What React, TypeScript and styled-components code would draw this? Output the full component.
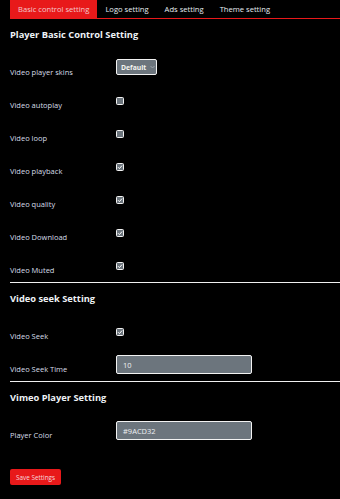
import styled, { createGlobalStyle } from 'styled-components';

const GlobalStyle = createGlobalStyle`
  html, body {
    margin: 0;
    padding: 0;
    background: #000;
  }
  body {
    font-family: 'Open Sans', 'DejaVu Sans', sans-serif;
    color: #dde3ea;
  }
`;

const tabs = ['Basic control setting', 'Logo setting', 'Ads setting', 'Theme setting'];

const basicRows = [
  { label: 'Video player skins', kind: 'select' },
  { label: 'Video autoplay', kind: 'check', checked: false },
  { label: 'Video loop', kind: 'check', checked: false },
  { label: 'Video playback', kind: 'check', checked: true },
  { label: 'Video quality', kind: 'check', checked: true },
  { label: 'Video Download', kind: 'check', checked: true },
  { label: 'Video Muted', kind: 'check', checked: true },
];

const CheckBox = ({ checked }: { checked: boolean }) => (
  <Box>
    {checked && (
      <svg width="6" height="6" viewBox="0 0 6 6">
        <path d="M1 3.2 L2.4 4.6 L5 1.6" stroke="#fff" strokeWidth="1" fill="none" />
      </svg>
    )}
  </Box>
);

const App = () => {
  return (
    <Page>
      <GlobalStyle />
      <TabBar>
        {tabs.map((t, i) => (
          <Tab key={t} active={i === 0}>{t}</Tab>
        ))}
      </TabBar>

      <Heading>Player Basic Control Setting</Heading>
      {basicRows.map((r) => (
        <Row key={r.label}>
          <Label>{r.label}</Label>
          {r.kind === 'select' ? (
            <Select>
              <span>Default</span>
              <svg width="5" height="4" viewBox="0 0 5 4">
                <path d="M0.5 1 L2.5 3 L4.5 1" stroke="#a8b0b8" strokeWidth="0.8" fill="none" />
              </svg>
            </Select>
          ) : (
            <CheckBox checked={!!r.checked} />
          )}
        </Row>
      ))}
      <Divider />

      <Heading>Video seek Setting</Heading>
      <Row>
        <Label>Video Seek</Label>
        <CheckBox checked />
      </Row>
      <Row>
        <Label>Video Seek Time</Label>
        <TextField>10</TextField>
      </Row>
      <Divider />

      <Heading>Vimeo Player Setting</Heading>
      <Row>
        <Label>Player Color</Label>
        <TextField>#9ACD32</TextField>
      </Row>

      <SaveButton>Save Settings</SaveButton>
    </Page>
  );
};

const Page = styled.div`
  padding: 0 0 12px 10px;
  background: #000;
  min-height: 499px;
  box-sizing: border-box;
`;

const TabBar = styled.div`
  display: flex;
  height: 18px;
  border-bottom: 1px solid #e8191a;
`;

const Tab = styled.div<{ active?: boolean }>`
  padding: 0 8px;
  height: 18px;
  display: flex;
  align-items: center;
  font-size: 7.6px;
  color: ${({ active }) => (active ? '#f4c8cc' : '#e6ecf2')};
  background: ${({ active }) => (active ? '#e8191a' : 'transparent')};
  white-space: nowrap;
`;

const Heading = styled.div`
  margin: 10px 0 11px;
  height: 12px;
  line-height: 12px;
  font-size: 9.3px;
  font-weight: 700;
  color: #eef2f6;
`;

const Row = styled.div`
  display: grid;
  grid-template-columns: 106px 1fr;
  align-items: start;
  height: 33px;
`;

const Label = styled.div`
  padding-top: 15px;
  line-height: 10px;
  font-size: 7.5px;
  color: #d6dee8;
  white-space: nowrap;
`;

const Box = styled.div`
  margin-top: 12px;
  width: 6px;
  height: 6px;
  border: 1px solid #f2f2f2;
  border-radius: 1.5px;
  background: #6c757d;
  display: flex;
  align-items: center;
  justify-content: center;
`;

const Select = styled.div`
  margin-top: 7px;
  width: 41px;
  height: 16px;
  box-sizing: border-box;
  border: 1px solid #f2f2f2;
  border-radius: 2px;
  background: #6c757d;
  display: flex;
  align-items: center;
  gap: 4px;
  padding-left: 4px;
  font-size: 6.8px;
  font-weight: 700;
  color: #f4f4f0;
`;

const TextField = styled.div`
  margin-top: 6px;
  width: 136px;
  height: 19px;
  box-sizing: border-box;
  border: 1px solid #f2f2f2;
  border-radius: 2px;
  background: #6c757d;
  display: flex;
  align-items: center;
  padding-left: 6px;
  font-size: 7.5px;
  color: #eef0f2;
`;

const Divider = styled.div`
  height: 1px;
  background: #f0f0f0;
  margin-top: -1px;
`;

const SaveButton = styled.button`
  margin-top: 21px;
  width: 51px;
  height: 16px;
  padding: 0;
  border: none;
  border-radius: 2px;
  background: #e8191a;
  color: #f6d6da;
  font-family: 'Open Sans', 'DejaVu Sans', sans-serif;
  font-size: 6.4px;
  cursor: pointer;
`;

export default App;
